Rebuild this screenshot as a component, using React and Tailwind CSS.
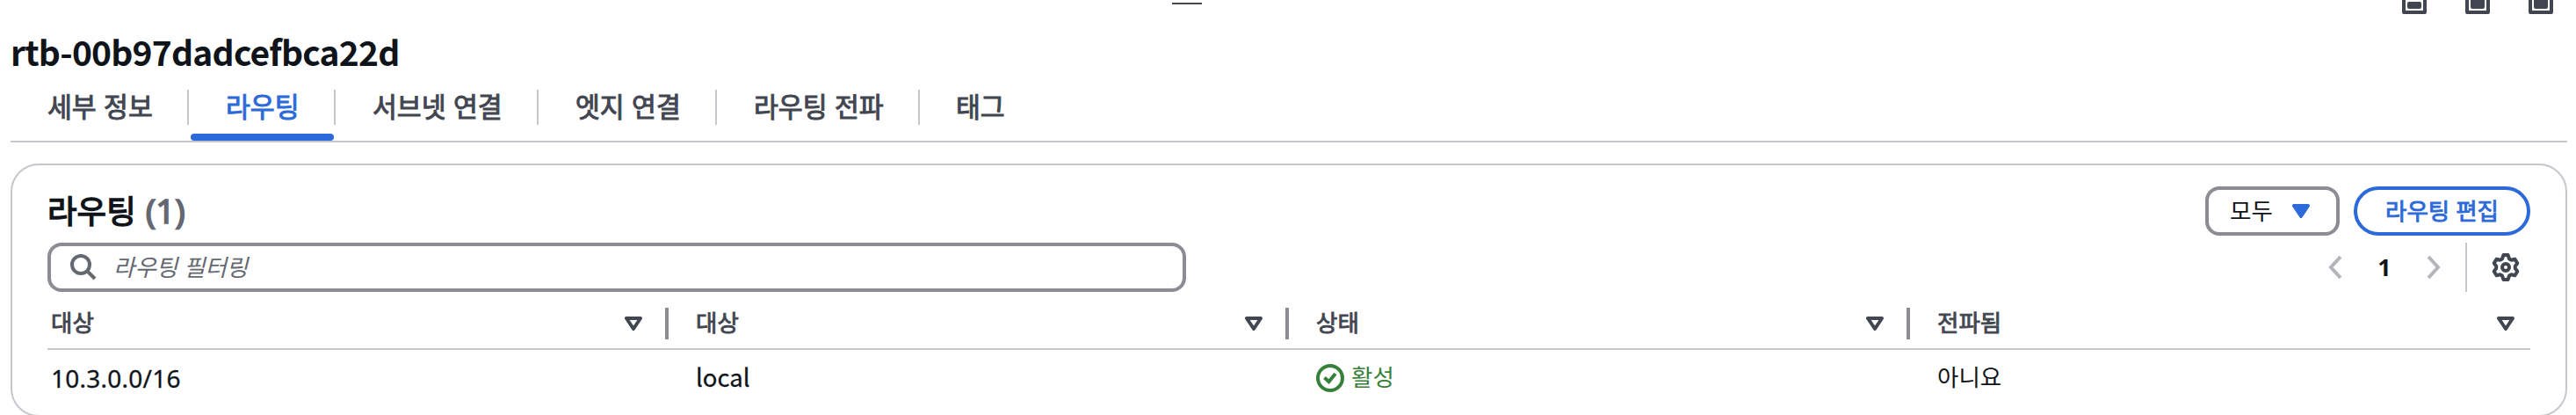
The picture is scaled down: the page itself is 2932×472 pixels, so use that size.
const KR = "font-['Noto_Sans_CJK_KR','Noto_Sans',sans-serif]";

const tabs = [
  { label: "세부 정보", cls: "w-[203px] pl-[42px]" },
  { label: "라우팅", cls: "w-[167px] pl-[42px]", active: true },
  { label: "서브넷 연결", cls: "w-[231px] pl-[42px]" },
  { label: "엣지 연결", cls: "w-[203px] pl-[42px]" },
  { label: "라우팅 전파", cls: "w-[231px] pl-[42px]" },
  { label: "태그", cls: "w-[140px] pl-[41px]", last: true },
];

const columns = [
  { label: "대상", cls: "w-[707px] pl-[4px]", tri: "pr-[26px]" },
  { label: "대상", cls: "w-[706px] pl-[31px]", tri: "pr-[26px]" },
  { label: "상태", cls: "w-[707px] pl-[31px]", tri: "pr-[26px]" },
  { label: "전파됨", cls: "w-[706px] pl-[31px]", tri: "pr-[18px]", last: true },
];

function PanelIcon({ top }) {
  return (
    <svg className="block h-4 w-7" viewBox="0 0 28 16" fill="none">
      <path d="M2 -12V14H26V-12" stroke="#424650" strokeWidth="4" strokeLinejoin="round" />
      <rect x="6" y={top} width="16" height={10 - top} rx="2" fill="#424650" />
    </svg>
  );
}

function Triangle({ filled, color }) {
  return (
    <svg className="block h-4 w-5 shrink-0" viewBox="0 0 20 16" fill={filled ? color : "none"}>
      <path d="M2 2H18L10 14Z" stroke={color} strokeWidth="4" strokeLinejoin="round" />
    </svg>
  );
}

function Chevron({ d }) {
  return (
    <svg className="block h-8 w-4" viewBox="0 0 16 32" fill="none">
      <path d={d} stroke="#b4b4bb" strokeWidth="4" />
    </svg>
  );
}

function Gear() {
  return (
    <svg className="block size-8" viewBox="0 0 32 32" fill="none" stroke="#424650" strokeWidth="4" strokeLinejoin="round">
      <path d="M13.5 2H18.5L20 6.4L22.5 7.8L26.5 6.8L29.3 11.4L26.8 14.8V17.2L29.3 20.6L26.5 25.2L22.5 24.2L20 25.6L18.5 30H13.5L12 25.6L9.5 24.2L5.5 25.2L2.7 20.6L5.2 17.2V14.8L2.7 11.4L5.5 6.8L9.5 7.8L12 6.4Z" />
      <circle cx="16" cy="16" r="4" />
    </svg>
  );
}

export default function App() {
  return (
    <div className={`h-[472px] w-[2932px] overflow-hidden bg-white pr-[10px] pl-3 text-[#0f141a] ${KR}`}>
      <div className="flex h-[36px] items-start justify-between pr-4 pl-[1322px]">
        <div className="mt-[3px] h-[2px] w-[34px] bg-[#424650]" />
        <div className="flex gap-[44px]">
          <PanelIcon top={2} />
          <PanelIcon top={-6} />
          <PanelIcon top={-6} />
        </div>
      </div>

      <h2 className="h-[64px] text-[39px] leading-[44px] font-bold tracking-[-0.8px]">rtb-00b97dadcefbca22d</h2>

      <div className="flex h-[62px] border-b-2 border-[#c6c6cd] pt-[2px]">
        {tabs.map((t) => (
          <div
            key={t.label}
            className={`relative h-[40px] text-[30.3px] leading-[37px] whitespace-nowrap [-webkit-text-stroke:1px_currentColor] [word-spacing:1.5px] ${t.cls} ${t.last ? "" : "border-r-2 border-[#c6c6cd]"} ${t.active ? "text-[#2c69d9]" : "text-[#424650]"}`}
          >
            {t.label}
            {t.active && <span className="absolute top-[50px] left-[2px] h-[8px] w-[163px] rounded-[4px] bg-[#2c69d9]" />}
          </div>
        ))}
      </div>

      <div className="mt-6 h-[288px] rounded-[32px] border-2 border-[#c6c6cd] px-[40px] pt-[24px]">
        <div className="flex h-[56px] items-center justify-between">
          <h3 className="flex gap-[11px] pb-[2px] text-[36.5px] leading-[44px]">
            <span className="[-webkit-text-stroke:1.4px_currentColor]">라우팅</span>
            <span className="font-['Noto_Sans',sans-serif] text-[38.5px] text-[#656871] [-webkit-text-stroke:1.6px_currentColor]">(1)</span>
          </h3>
          <div className="flex gap-4">
            <div className="flex h-[56px] w-[153px] items-center gap-[22px] rounded-[16px] border-4 border-[#8c8c94] pl-[24px] text-[26.5px]">
              <span className="-mt-[3px]">모두</span>
              <Triangle filled color="#2c69d9" />
            </div>
            <button className="h-[56px] w-[201px] rounded-full border-4 border-[#2c69d9] pb-[3px] text-[26.5px] text-[#2c69d9] [-webkit-text-stroke:0.9px_currentColor] [word-spacing:1px]">라우팅 편집</button>
          </div>
        </div>

        <div className="mt-2 flex h-[56px] items-center justify-between">
          <div className="flex h-[56px] w-[1296px] items-center gap-[19px] rounded-[16px] border-4 border-[#8c8c94] pl-[22px]">
            <svg className="block size-[30px]" viewBox="0 0 30 30" fill="none" stroke="#656871" strokeWidth="4">
              <circle cx="12" cy="12" r="10" />
              <path d="M19 19L28 28" />
            </svg>
            <span className="-mt-[3px] text-[26.5px] text-[#656871] italic [word-spacing:1px]">라우팅 필터링</span>
          </div>
          <div className="flex h-[56px] items-center pr-3">
            <Chevron d="M14 4L3 16L14 28" />
            <span className="w-[96px] text-center font-['Noto_Sans',sans-serif] text-[27px] font-bold">1</span>
            <Chevron d="M2 4L13 16L2 28" />
            <div className="ml-[28px] h-[56px] w-[2px] bg-[#c6c6cd]" />
            <div className="ml-[28px]"><Gear /></div>
          </div>
        </div>

        <div className="mt-[18px] flex h-[48px] border-b-2 border-[#c6c6cd]">
          {columns.map((c, i) => (
            <div key={i} className={`flex h-[36px] items-center justify-between text-[26.5px] text-[#424650] ${c.cls} ${c.tri} ${c.last ? "" : "border-r-4 border-r-[#8c8c94]"}`}>
              <span className="-mt-[4px] [-webkit-text-stroke:0.9px_currentColor]">{c.label}</span>
              <Triangle color="#424650" />
            </div>
          ))}
        </div>

        <div className="flex h-[64px] items-center text-[26.5px]">
          <div className="w-[707px] pb-[1px] pl-[4px] font-['Noto_Sans',sans-serif] text-[28px] tracking-[0.25px] [-webkit-text-stroke:0.3px_currentColor]">10.3.0.0/16</div>
          <div className="w-[706px] pb-[3px] pl-[31px] text-[27.5px] [-webkit-text-stroke:0.3px_currentColor]">local</div>
          <div className="flex w-[707px] items-center gap-[8px] pl-[31px] text-[#37803a]">
            <svg className="block size-8" viewBox="0 0 32 32" fill="none" stroke="#37803a" strokeWidth="4">
              <circle cx="16" cy="16" r="14" />
              <path d="M9.5 15.5L14.5 20L22 11" />
            </svg>
            <span className="-mt-[4px]">활성</span>
          </div>
          <div className="w-[706px] pb-[4px] pl-[31px]">아니요</div>
        </div>
      </div>
    </div>
  );
}
